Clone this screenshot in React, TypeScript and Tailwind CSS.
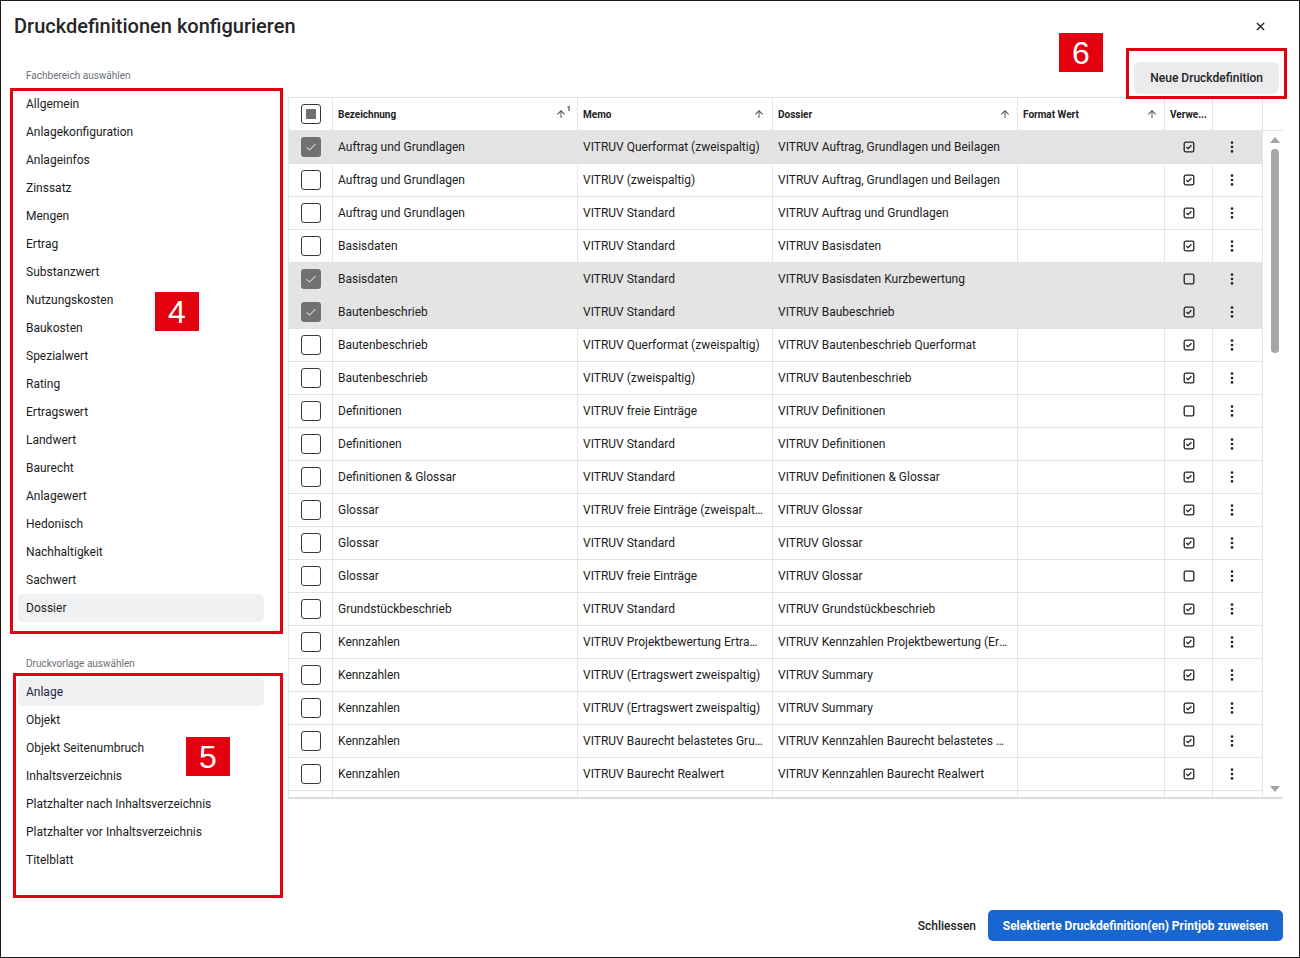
import React from "react";

const fachbereiche = [
  "Allgemein",
  "Anlagekonfiguration",
  "Anlageinfos",
  "Zinssatz",
  "Mengen",
  "Ertrag",
  "Substanzwert",
  "Nutzungskosten",
  "Baukosten",
  "Spezialwert",
  "Rating",
  "Ertragswert",
  "Landwert",
  "Baurecht",
  "Anlagewert",
  "Hedonisch",
  "Nachhaltigkeit",
  "Sachwert",
  "Dossier",
];

const vorlagen = [
  "Anlage",
  "Objekt",
  "Objekt Seitenumbruch",
  "Inhaltsverzeichnis",
  "Platzhalter nach Inhaltsverzeichnis",
  "Platzhalter vor Inhaltsverzeichnis",
  "Titelblatt",
];

type Row = { bez: string; memo: string; dossier: string; used: boolean; sel?: boolean };

const rows: Row[] = [
  { bez: "Auftrag und Grundlagen", memo: "VITRUV Querformat (zweispaltig)", dossier: "VITRUV Auftrag, Grundlagen und Beilagen", used: true, sel: true },
  { bez: "Auftrag und Grundlagen", memo: "VITRUV (zweispaltig)", dossier: "VITRUV Auftrag, Grundlagen und Beilagen", used: true },
  { bez: "Auftrag und Grundlagen", memo: "VITRUV Standard", dossier: "VITRUV Auftrag und Grundlagen", used: true },
  { bez: "Basisdaten", memo: "VITRUV Standard", dossier: "VITRUV Basisdaten", used: true },
  { bez: "Basisdaten", memo: "VITRUV Standard", dossier: "VITRUV Basisdaten Kurzbewertung", used: false, sel: true },
  { bez: "Bautenbeschrieb", memo: "VITRUV Standard", dossier: "VITRUV Baubeschrieb", used: true, sel: true },
  { bez: "Bautenbeschrieb", memo: "VITRUV Querformat (zweispaltig)", dossier: "VITRUV Bautenbeschrieb Querformat", used: true },
  { bez: "Bautenbeschrieb", memo: "VITRUV (zweispaltig)", dossier: "VITRUV Bautenbeschrieb", used: true },
  { bez: "Definitionen", memo: "VITRUV freie Einträge", dossier: "VITRUV Definitionen", used: false },
  { bez: "Definitionen", memo: "VITRUV Standard", dossier: "VITRUV Definitionen", used: true },
  { bez: "Definitionen & Glossar", memo: "VITRUV Standard", dossier: "VITRUV Definitionen & Glossar", used: true },
  { bez: "Glossar", memo: "VITRUV freie Einträge (zweispaltig)", dossier: "VITRUV Glossar", used: true },
  { bez: "Glossar", memo: "VITRUV Standard", dossier: "VITRUV Glossar", used: true },
  { bez: "Glossar", memo: "VITRUV freie Einträge", dossier: "VITRUV Glossar", used: false },
  { bez: "Grundstückbeschrieb", memo: "VITRUV Standard", dossier: "VITRUV Grundstückbeschrieb", used: true },
  { bez: "Kennzahlen", memo: "VITRUV Projektbewertung Ertragswert", dossier: "VITRUV Kennzahlen Projektbewertung (Ertragswert)", used: true },
  { bez: "Kennzahlen", memo: "VITRUV (Ertragswert zweispaltig)", dossier: "VITRUV Summary", used: true },
  { bez: "Kennzahlen", memo: "VITRUV (Ertragswert zweispaltig)", dossier: "VITRUV Summary", used: true },
  { bez: "Kennzahlen", memo: "VITRUV Baurecht belastetes Grundstück", dossier: "VITRUV Kennzahlen Baurecht belastetes Grundstück", used: true },
  { bez: "Kennzahlen", memo: "VITRUV Baurecht Realwert", dossier: "VITRUV Kennzahlen Baurecht Realwert", used: true },
  { bez: "Kennzahlen", memo: "VITRUV Baurecht Landwert", dossier: "VITRUV Kennzahlen Baurecht Landwert", used: true },
];

const cols = "grid grid-cols-[45px_245px_195px_245px_147px_48px_50px]";

function SortArrow() {
  return (
    <svg width="12" height="12" viewBox="0 0 24 24" className="text-[#555]">
      <path fill="currentColor" d="M4 12l1.41 1.41L11 7.83V20h2V7.83l5.58 5.59L20 12l-8-8-8 8z" />
    </svg>
  );
}

function Box({ checked }: { checked?: boolean }) {
  if (checked)
    return (
      <div className="w-[20px] h-[20px] rounded-[3px] bg-[#717171] flex items-center justify-center">
        <svg width="14" height="14" viewBox="0 0 14 14">
          <path d="M2.5 7.2 L5.6 10 L11.5 4" stroke="#fff" strokeWidth="1" fill="none" />
        </svg>
      </div>
    );
  return <div className="w-[20px] h-[20px] rounded-[3px] border-[1.5px] border-[#3a3a3a] bg-white" />;
}

function SmallCheck({ on }: { on: boolean }) {
  return (
    <svg width="12" height="12" viewBox="0 0 12 12">
      <rect x="1.2" y="1.2" width="9.6" height="9.6" rx="1.6" stroke="#222" strokeWidth="1.3" fill="none" />
      {on && <path d="M3.4 6 L5.1 7.6 L8.4 4.3" stroke="#222" strokeWidth="1.3" fill="none" />}
    </svg>
  );
}

function Kebab() {
  return (
    <svg width="4" height="12" viewBox="0 0 4 12">
      <circle cx="2" cy="1.6" r="1.3" fill="#222" />
      <circle cx="2" cy="6" r="1.3" fill="#222" />
      <circle cx="2" cy="10.4" r="1.3" fill="#222" />
    </svg>
  );
}

function Badge({ n, className }: { n: string; className: string }) {
  return (
    <div
      className={
        "absolute w-[44px] h-[39px] bg-[#e3000f] text-white flex items-center justify-center text-[32px] leading-none font-['Liberation_Sans',sans-serif] " +
        className
      }
    >
      {n}
    </div>
  );
}

export default function App() {
  return (
    <div className="relative w-[1300px] h-[958px] bg-white border border-[#1c1c1c] flex flex-col text-[#1c1c1c] font-['Roboto','Noto_Sans',sans-serif] overflow-hidden">
      {/* title */}
      <div className="flex items-start justify-between pl-[13px] pr-[34px] pt-[11px]">
        <h1 className="text-[20px] leading-[28px] font-medium text-[#262626]">Druckdefinitionen konfigurieren</h1>
        <svg width="9" height="9" viewBox="0 0 10 10" className="mt-[10px]">
          <path d="M1 1 L9 9 M9 1 L1 9" stroke="#222" strokeWidth="1.5" />
        </svg>
      </div>

      <div className="flex gap-[24px] pl-[17px]">
        {/* left */}
        <div className="w-[246px] flex flex-col">
          <div className="mt-[29px] mb-[7px] px-[8px] text-[10px] leading-[14px] text-[#6b6f76]">Fachbereich auswählen</div>
          {fachbereiche.map((f) => (
            <div
              key={f}
              className={
                "h-[28px] px-[8px] flex items-center text-[12px] rounded-[5px] " +
                (f === "Dossier" ? "bg-[#f0f1f3]" : "")
              }
            >
              {f}
            </div>
          ))}
          <div className="mt-[35px] mb-[7px] px-[8px] text-[10px] leading-[14px] text-[#6b6f76]">Druckvorlage auswählen</div>
          {vorlagen.map((f) => (
            <div
              key={f}
              className={
                "h-[28px] px-[8px] flex items-center text-[12px] rounded-[5px] " +
                (f === "Anlage" ? "bg-[#f0f1f3] text-[#1b2440]" : "")
              }
            >
              {f}
            </div>
          ))}
        </div>

        {/* right */}
        <div className="w-[995px] flex flex-col">
          <div className="flex justify-end pr-[4px] mt-[22px] mb-[3px]">
            <button className="h-[32px] px-[16px] rounded-[6px] bg-[#ebebed] text-[12px] font-medium text-[#222]">
              Neue Druckdefinition
            </button>
          </div>

          <div className="border-t border-[#e3e3e3]">
            <div className="flex border-b border-[#e3e3e3]">
              <div className={cols + " h-[32px] text-[10px] font-bold text-[#222]"}>
                <div className="border-l border-r border-[#e6e6e6] flex items-center justify-center">
                  <div className="w-[20px] h-[20px] rounded-[3px] border-[1.5px] border-[#3a3a3a] flex items-center justify-center">
                    <div className="w-[10px] h-[10px] rounded-[1px] bg-[#6f6f6f]" />
                  </div>
                </div>
                <div className="border-r border-[#e6e6e6] flex items-center justify-between pl-[5px] pr-[6px]">
                  <span>Bezeichnung</span>
                  <span className="flex items-start">
                    <SortArrow />
                    <span className="text-[8px] -mt-[5px] ml-[-1px] font-medium">1</span>
                  </span>
                </div>
                <div className="border-r border-[#e6e6e6] flex items-center justify-between pl-[5px] pr-[7px]">
                  <span>Memo</span>
                  <SortArrow />
                </div>
                <div className="border-r border-[#e6e6e6] flex items-center justify-between pl-[5px] pr-[6px]">
                  <span>Dossier</span>
                  <SortArrow />
                </div>
                <div className="border-r border-[#e6e6e6] flex items-center justify-between pl-[5px] pr-[6px]">
                  <span>Format Wert</span>
                  <SortArrow />
                </div>
                <div className="border-r border-[#e6e6e6] flex items-center pl-[5px] truncate">Verwe...</div>
                <div className="border-r border-[#e6e6e6]" />
              </div>
              <div className="w-[20px]" />
            </div>

            <div className="flex h-[666px] overflow-hidden">
              <div className="w-[975px]">
                {rows.map((r, i) => (
                  <div
                    key={i}
                    className={cols + " h-[33px] border-b border-[#e3e3e3] text-[12px] " + (r.sel ? "bg-[#e4e4e4]" : "bg-white")}
                  >
                    <div className="border-l border-r border-[#e6e6e6] flex items-center justify-center">
                      <Box checked={r.sel} />
                    </div>
                    <div className="border-r border-[#e6e6e6] flex items-center pl-[5px] pr-[9px] min-w-0">
                      <span className="truncate">{r.bez}</span>
                    </div>
                    <div className="border-r border-[#e6e6e6] flex items-center pl-[5px] pr-[9px] min-w-0">
                      <span className="truncate">{r.memo}</span>
                    </div>
                    <div className="border-r border-[#e6e6e6] flex items-center pl-[5px] pr-[9px] min-w-0">
                      <span className="truncate">{r.dossier}</span>
                    </div>
                    <div className="border-r border-[#e6e6e6]" />
                    <div className="border-r border-[#e6e6e6] flex items-center justify-center">
                      <SmallCheck on={r.used} />
                    </div>
                    <div className="border-r border-[#e6e6e6] flex items-center pl-[17px]">
                      <Kebab />
                    </div>
                  </div>
                ))}
              </div>
              {/* scrollbar */}
              <div className="w-[20px] flex flex-col items-center pl-[3px] pt-[6px] pb-[5px]">
                <svg width="10" height="6" viewBox="0 0 10 6">
                  <path d="M0 6 L5 0 L10 6 Z" fill="#a3a3a3" />
                </svg>
                <div className="mt-[6px] w-[8px] h-[204px] rounded-full bg-[#a6a6a6]" />
                <div className="flex-1" />
                <svg width="10" height="6" viewBox="0 0 10 6">
                  <path d="M0 0 L10 0 L5 6 Z" fill="#a3a3a3" />
                </svg>
              </div>
            </div>
            <div className="h-[2px] bg-[#dcdcdc]" />
          </div>
        </div>
      </div>

      {/* footer */}
      <div className="mt-auto flex items-center justify-end gap-[12px] pr-[16px] pb-[16px]">
        <span className="text-[12px] font-medium text-[#222]">Schliessen</span>
        <button className="h-[31px] w-[295px] rounded-[5px] bg-[#1866cf] text-white text-[12px] font-bold">
          Selektierte Druckdefinition(en) Printjob zuweisen
        </button>
      </div>

      {/* annotations */}
      <div className="absolute left-[9px] top-[87px] w-[273px] h-[546px] border-[3px] border-[#e3000f]" />
      <div className="absolute left-[12px] top-[672px] w-[270px] h-[225px] border-[3px] border-[#e3000f]" />
      <div className="absolute left-[1125px] top-[47px] w-[161px] h-[51px] border-[3px] border-[#e3000f]" />
      <Badge n="4" className="left-[154px] top-[291px]" />
      <Badge n="5" className="left-[185px] top-[736px]" />
      <Badge n="6" className="left-[1058px] top-[32px]" />
    </div>
  );
}
